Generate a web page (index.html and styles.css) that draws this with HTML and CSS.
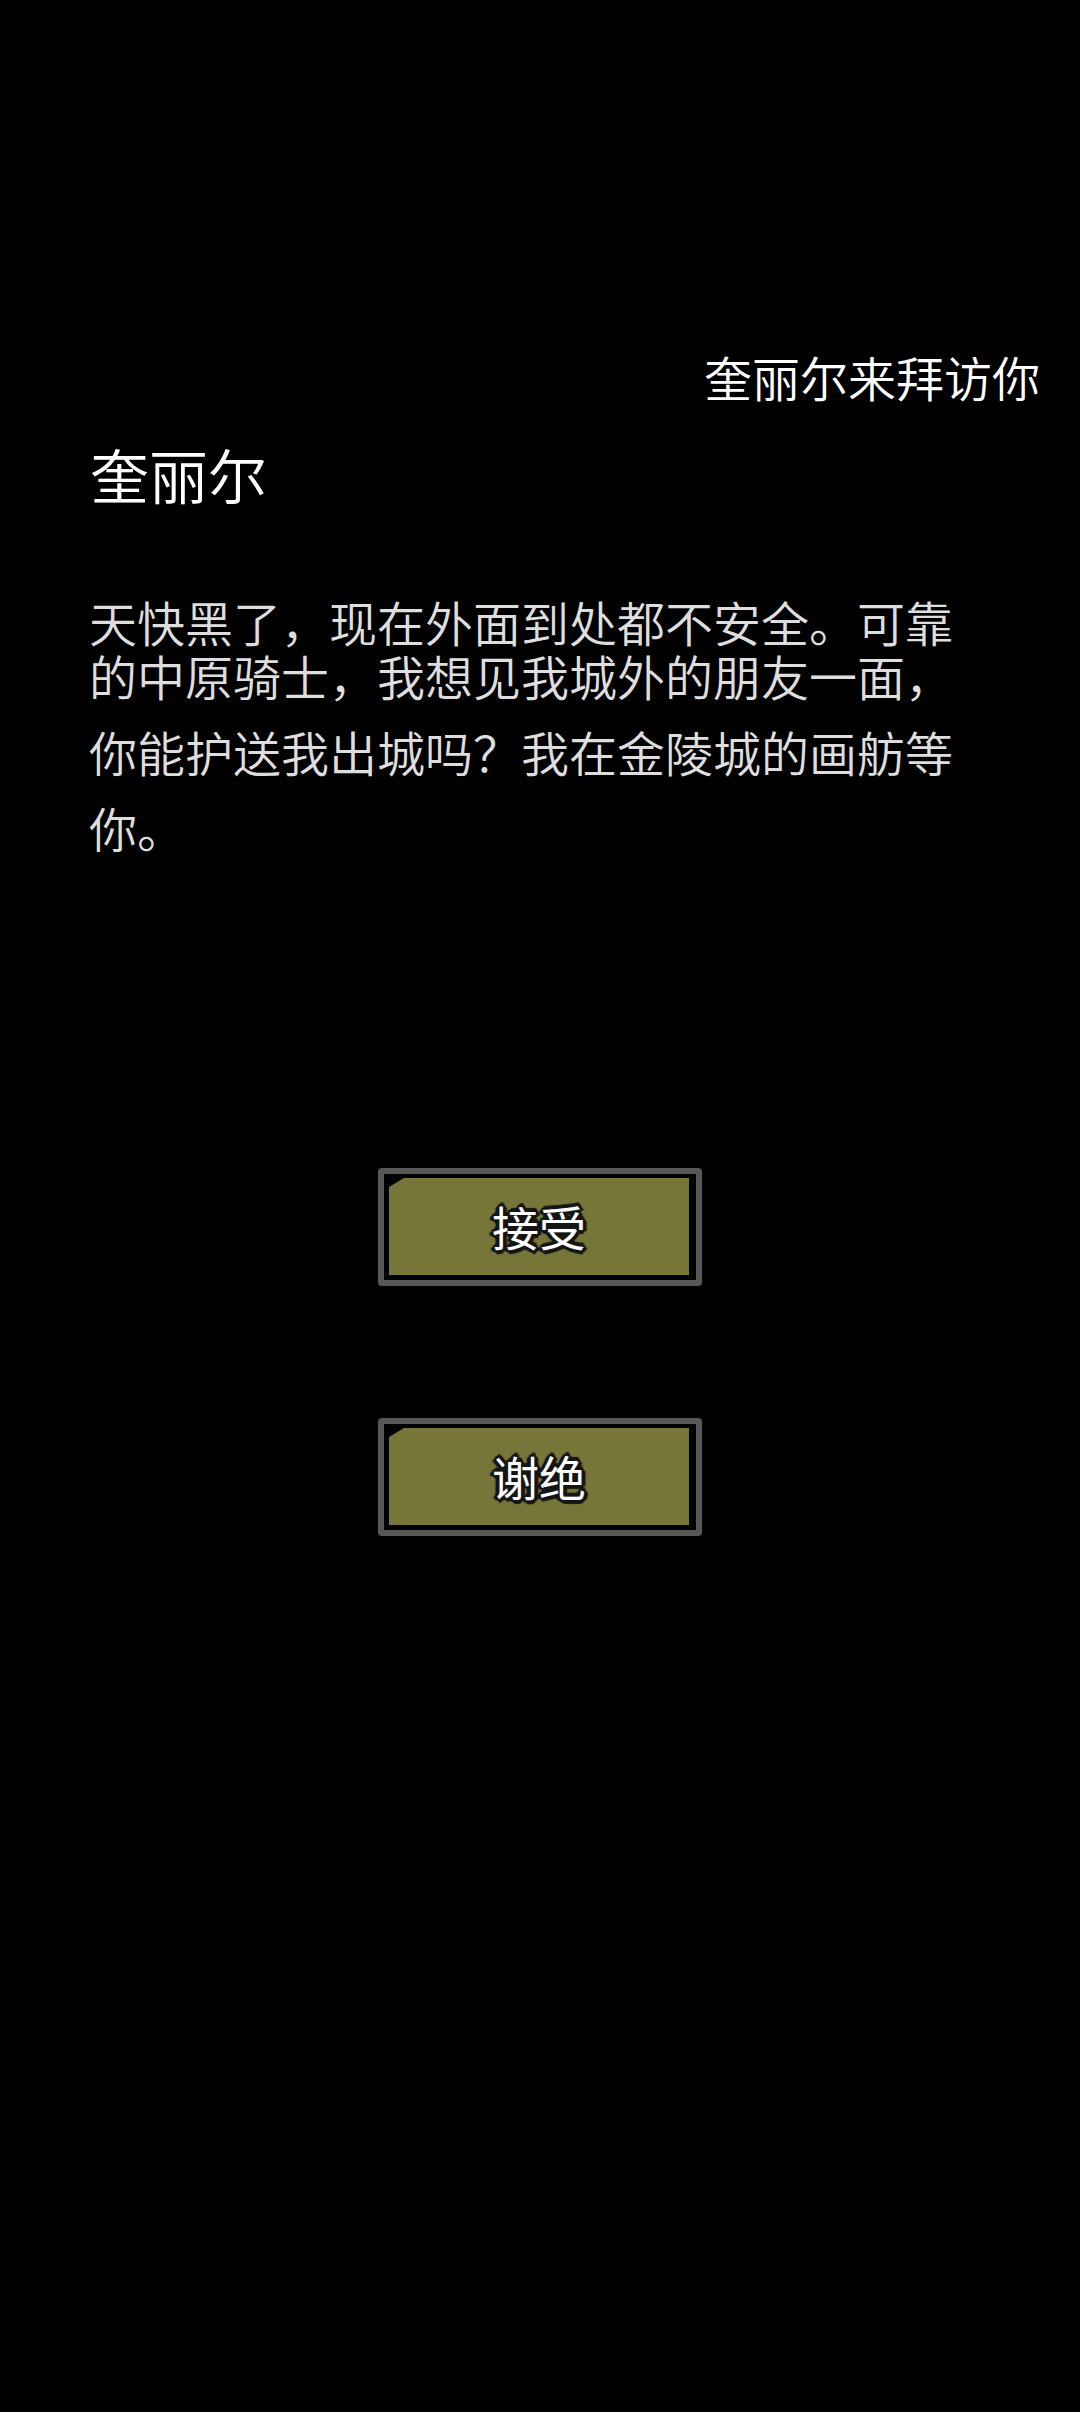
FILE: index.html
```html
<!DOCTYPE html>
<html lang="zh-CN">
<head>
    <meta charset="UTF-8">
    <meta name="viewport" content="width=device-width, initial-scale=1.0">
    <title>奎丽尔来拜访你</title>
    <link rel="stylesheet" href="styles.css">
</head>
<body>
    <div class="dialog">
        <div class="visit-title">奎丽尔来拜访你</div>
        <div class="speaker">奎丽尔</div>

        <div class="speech">
            <div class="line">天快黑了，现在外面到处都不安全。可靠</div>
            <div class="line">的中原骑士，我想见我城外的朋友一面，</div>
            <div class="line wide">你能护送我出城吗？我在金陵城的画舫等</div>
            <div class="line wide">你。</div>
        </div>

        <div class="choices">
            <button class="choice"><span class="choice-face">接受</span></button>
            <button class="choice"><span class="choice-face">谢绝</span></button>
        </div>
    </div>
</body>
</html>
```

FILE: styles.css
```css
body {
    margin: 0;
    padding: 0;
    background-color: #000;
    font-family: "Noto Sans CJK SC", "Noto Sans", sans-serif;
    font-weight: 350;
    color: #fff;
}

.dialog {
    width: 1080px;
    min-height: 2412px;
    padding-top: 348px;
    box-sizing: border-box;
}

.visit-title {
    font-size: 48px;
    line-height: 56px;
    text-align: right;
    padding-right: 40px;
    color: #fff;
}

.speaker {
    margin-top: 36px;
    padding-left: 90px;
    font-size: 59px;
    line-height: 68px;
    color: #fff;
}

.speech {
    margin-top: 86px;
    padding-left: 89px;
    font-size: 48px;
    color: #dedede;
}

.speech .line {
    height: 54px;
    line-height: 54px;
    white-space: nowrap;
}

.speech .line.wide {
    margin-top: 22px;
}

.choices {
    margin-top: 314px;
    display: flex;
    flex-direction: column;
    align-items: center;
    gap: 132px;
}

.choice {
    width: 324px;
    height: 118px;
    box-sizing: border-box;
    border: 6px solid #575757;
    border-radius: 4px;
    background-color: #000;
    padding: 4px 7px 5px 5px;
    margin: 0;
    display: flex;
    cursor: pointer;
}

.choice-face {
    flex: 1;
    display: flex;
    align-items: center;
    justify-content: center;
    background-color: #767639;
    clip-path: polygon(15px 0, 100% 0, 100% 100%, 0 100%, 0 9px);
    font-family: "Noto Sans CJK SC", sans-serif;
    font-size: 47px;
    font-weight: 400;
    color: #fff;
    padding-bottom: 2px;
    text-shadow:
        3px 0 0 #151515, -3px 0 0 #151515, 0 3px 0 #151515, 0 -3px 0 #151515,
        2px 2px 0 #151515, -2px 2px 0 #151515, 2px -2px 0 #151515, -2px -2px 0 #151515,
        4px 1px 1px #151515, -4px 1px 1px #151515, 1px 4px 1px #151515, 1px -4px 1px #151515;
}
```
